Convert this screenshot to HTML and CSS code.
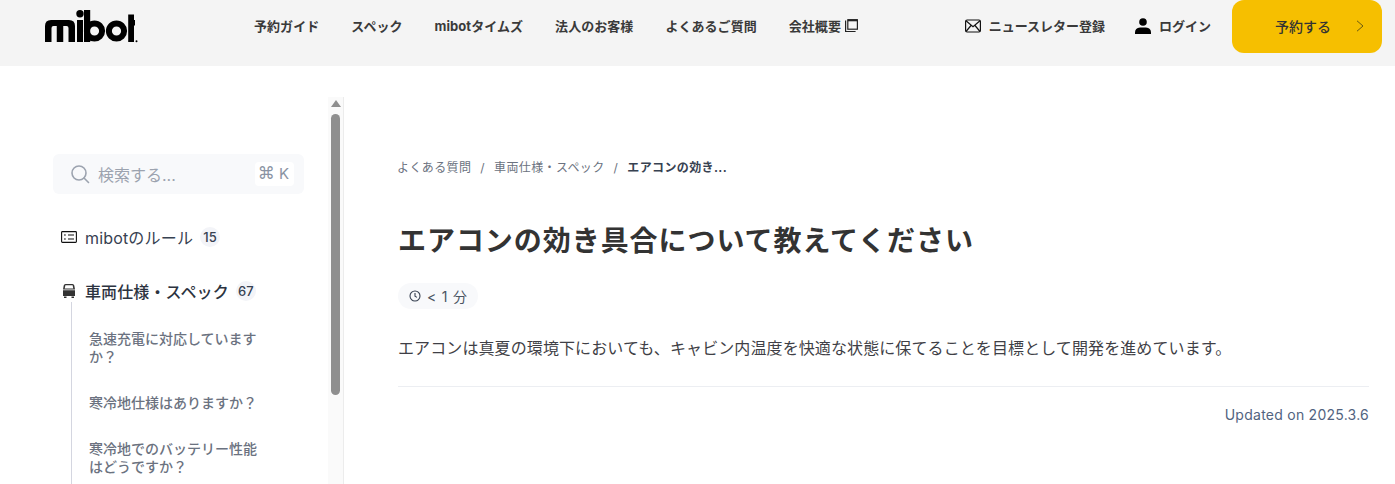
FILE: index.html
```html
<!DOCTYPE html>
<html lang="ja">
<head>
<meta charset="utf-8">
<title>エアコンの効き具合について教えてください</title>
<link rel="stylesheet" href="styles.css">
</head>
<body>
<header class="site-header">
  <a class="logo" href="#" aria-label="mibot">
    <svg width="94" height="34" viewBox="0 0 94 34">
      <g fill="#000">
        <path d="M0 32V16q0-6 6-6h18q6 0 6 6v16h-6.500V18q0-2-2-2h-3.250v16H11.750V16H8.500q-2 0-2 2v14z"/>
        <rect x="32" y="10" width="6" height="22"/>
        <circle cx="35" cy="3.800" r="3.700"/>
        <rect x="39" y="0" width="6.200" height="32"/>
        <circle cx="71.500" cy="21" r="7.600" fill="none" stroke="#000" stroke-width="6"/>
        <circle cx="49.500" cy="21" r="7.600" fill="none" stroke="#000" stroke-width="6"/>
        <path d="M83.200 4.500H89V10h1v5.500h-1V32h-5.800z"/>
        <circle cx="91.500" cy="31.300" r="1"/>
      </g>
    </svg>
  </a>
  <nav class="main-nav">
    <a href="#">予約ガイド</a>
    <a href="#">スペック</a>
    <a href="#">mibotタイムズ</a>
    <a href="#">法人のお客様</a>
    <a href="#">よくあるご質問</a>
    <a href="#" class="ext">会社概要
      <svg width="13" height="13" viewBox="0 0 13 13" fill="none" stroke="#222" stroke-width="1.200"><path d="M.6 1.500v11h10"/><rect x="2.800" y=".8" width="9.600" height="9.400"/><path d="M2.800 1.300h9.600" stroke-width="2"/></svg>
    </a>
  </nav>
  <div class="header-actions">
    <a href="#" class="action">
      <svg width="16" height="14" viewBox="0 0 16 14" fill="none" stroke="#111" stroke-width="1.200"><rect x=".6" y="1" width="14.800" height="12" rx="1.500"/><path d="M1 1.800l7 6 7-6M1 12.500l5-6M15 12.500l-5-6"/></svg>
      <span>ニュースレター登録</span>
    </a>
    <a href="#" class="action login">
      <svg width="16" height="16" viewBox="0 0 16 16" fill="#000"><circle cx="8" cy="4" r="3.800"/><path d="M0 16v-1.500q0-4.500 5-5h6q5 .5 5 5V16z"/></svg>
      <span>ログイン</span>
    </a>
    <a href="#" class="reserve">
      <span>予約する</span>
      <svg width="8" height="12" viewBox="0 0 8 12" fill="none" stroke="#6b5a10" stroke-width="1"><path d="M1 .8L7 6l-6 5.200"/></svg>
    </a>
  </div>
</header>

<div class="layout">
  <aside class="sidebar">
    <div class="sidebar-inner">
      <div class="search">
        <svg width="20" height="20" viewBox="0 0 20 20" fill="none" stroke="#9ca3af" stroke-width="1.600"><circle cx="9" cy="9" r="7"/><path d="M14 14l4.500 4.500" stroke-linecap="round"/></svg>
        <span class="search-label">検索する...</span>
        <span class="kbd"><span class="cmd">⌘</span> K</span>
      </div>
      <div class="cat">
        <svg width="16" height="12" viewBox="0 0 16 12" fill="none" stroke="#111" stroke-width="1.100"><rect x=".6" y=".6" width="14.800" height="10.800" rx=".8"/><path d="M7 4h6M7 8h6M3 4h1.800M3 8h1.800"/></svg>
        <span class="cat-name">mibotのルール</span>
        <span class="count">15</span>
      </div>
      <div class="cat active">
        <svg width="16" height="14" viewBox="0 0 16 14" fill="#333"><path d="M4.500 0h7Q13 0 13.300 1.500l.7 3.900H2l.7-3.900Q3 0 4.500 0zM4.400 1.300L3.700 4.400h8.600l-.7-3.100z" fill-rule="evenodd"/><path d="M2 6.200h12V12H2zM3 12.500h2.500V14H3zM10.500 12.500H13V14h-2.500z"/></svg>
        <span class="cat-name">車両仕様・スペック</span>
        <span class="count">67</span>
      </div>
      <ul class="sub-list">
        <li>急速充電に対応しています<br>か？</li>
        <li>寒冷地仕様はありますか？</li>
        <li>寒冷地でのバッテリー性能<br>はどうですか？</li>
      </ul>
    </div>
    <div class="scrollbar">
      <span class="arrow"></span>
      <span class="thumb"></span>
    </div>
  </aside>

  <main class="content">
    <div class="crumbs">
      <a href="#">よくある質問</a><span class="sep">/</span><a href="#">車両仕様・スペック</a><span class="sep">/</span><strong>エアコンの効き...</strong>
    </div>
    <h1>エアコンの効き具合について教えてください</h1>
    <div class="read-time">
      <svg width="12" height="12" viewBox="0 0 12 12" fill="none" stroke="#374151" stroke-width="1.100"><circle cx="6" cy="6" r="5"/><path d="M6 3v3.200l2 1.200"/></svg>
      <span>&lt; 1 分</span>
    </div>
    <p class="body-text">エアコンは真夏の環境下においても、キャビン内温度を快適な状態に保てることを目標として開発を進めています。</p>
    <div class="updated">Updated on 2025.3.6</div>
  </main>
</div>
</body>
</html>
```
FILE: styles.css
```css
* { box-sizing: border-box; }
html, body { margin: 0; height: 484px; overflow: hidden; }
body {
  background: #fff;
  color: #333;
  font-family: Inter, "Noto Sans CJK JP", sans-serif;
}
a { color: inherit; text-decoration: none; }
svg { display: block; flex: none; }

.site-header {
  height: 66px;
  background: #f4f4f4;
  display: flex;
  align-items: flex-start;
  padding-left: 45px;
  padding-right: 13px;
}
.logo { margin-top: 10px; width: 94px; }
.main-nav {
  display: flex;
  gap: 32px;
  margin-left: 115px;
  height: 51px;
  align-items: center;
  font-size: 13px;
  font-weight: 700;
  color: #3a3a3a;
  white-space: nowrap;
  letter-spacing: .05px;
}
.ext { display: flex; align-items: center; gap: 4px; }
.header-actions {
  margin-left: auto;
  display: flex;
  align-items: flex-start;
  font-size: 13px;
  font-weight: 700;
  color: #3a3a3a;
  white-space: nowrap;
}
.action { display: flex; align-items: center; gap: 8px; margin-right: 30px; height: 51px; }
.login { margin-right: 21px; }
.reserve {
  width: 150px;
  height: 53px;
  background: #f6bf00;
  border-radius: 12px;
  display: flex;
  align-items: center;
  padding: 0 18px 1px 43px;
  justify-content: space-between;
  font-size: 14px;
  font-weight: 500;
  color: #333;
}

.layout { display: flex; height: 418px; }
.sidebar {
  width: 344px;
  margin-top: 31px;
  flex: none;
  display: flex;
  overflow: hidden;
  border-right: 1px solid #ececec;
}
.sidebar-inner { width: 328px; padding: 57px 24px 0 53px; flex: none; }
.search {
  height: 40px;
  background: #f8f9fb;
  border-radius: 6px;
  display: flex;
  align-items: center;
  padding: 0 10px 0 17px;
  width: 251px;
  color: #9ca3af;
}
.search-label { font-size: 16px; margin-left: 8px; }
.kbd {
  margin-left: auto;
  background: #fff;
  border-radius: 4px;
  font-size: 15px;
  font-weight: 400;
  padding: 0 5px 0 3px;
  height: 24px;
  line-height: 24px;
  color: #8a93a3;
  white-space: nowrap;
}
.cmd { font-family: "DejaVu Sans", sans-serif; font-size: 17px; line-height: 20px; }
.cat {
  display: flex;
  align-items: center;
  height: 24px;
  margin-top: 31px;
  padding-left: 8px;
  font-size: 16px;
  color: #374151;
  white-space: nowrap;
  letter-spacing: .17px;
}
.cat svg { margin-right: 8px; }
.cat.active {
  height: 22px;
  margin-top: 31px;
  font-weight: 500;
  color: #2c3340;
  letter-spacing: .1px;
}
.count {
  margin-left: 7px;
  min-width: 20px;
  height: 20px;
  border-radius: 10px;
  background: #f3f4f8;
  font-size: 13px;
  line-height: 20px;
  text-align: center;
  font-weight: 500;
  color: #374151;
  letter-spacing: 0;
}
.sub-list {
  list-style: none;
  margin: 0 0 0 18px;
  padding: 28px 0 1px 17px;
  border-left: 1px solid #d4d6e0;
  font-size: 14px;
  line-height: 18px;
  font-weight: 500;
  color: #6b7280;
  white-space: nowrap;
}
.sub-list li { margin-bottom: 28px; }

.scrollbar {
  width: 15px;
  background: #fafafa;
  display: flex;
  flex-direction: column;
  align-items: center;
  flex: none;
}
.arrow {
  margin-top: 3px;
  width: 0;
  height: 0;
  border-left: 5px solid transparent;
  border-right: 5px solid transparent;
  border-bottom: 7px solid #8f8f8f;
}
.thumb {
  margin-top: 7px;
  width: 9px;
  height: 281px;
  background: #8f8f8f;
  border-radius: 5px;
}

.content { flex: 1; padding: 92px 26px 0 54px; min-width: 0; }
.crumbs {
  display: flex;
  font-size: 12px;
  line-height: 20px;
  color: #6b7280;
  white-space: nowrap;
  letter-spacing: .38px;
  margin-left: -1px;
}
.crumbs .sep { margin: 0 9px; }
.crumbs strong { font-weight: 700; color: #374151; }
h1 {
  margin: 43px 0 0;
  font-size: 28px;
  line-height: 40px;
  font-weight: 700;
  letter-spacing: .95px;
  color: #333;
}
.read-time {
  display: inline-flex;
  align-items: center;
  gap: 6px;
  margin-top: 22px;
  height: 26px;
  padding: 0 10px 0 11px;
  border-radius: 13px;
  background: #f8f9fb;
  font-size: 14px;
  color: #4b5563;
  letter-spacing: .8px;
}
.body-text {
  margin: 25px 0 0;
  font-size: 16px;
  line-height: 28px;
  color: #3f3f46;
  letter-spacing: .1px;
}
.updated {
  margin-top: 24px;
  border-top: 1px solid #eceef2;
  padding-top: 18px;
  text-align: right;
  font-size: 14px;
  line-height: 20px;
  color: #526380;
  letter-spacing: .25px;
}
```
